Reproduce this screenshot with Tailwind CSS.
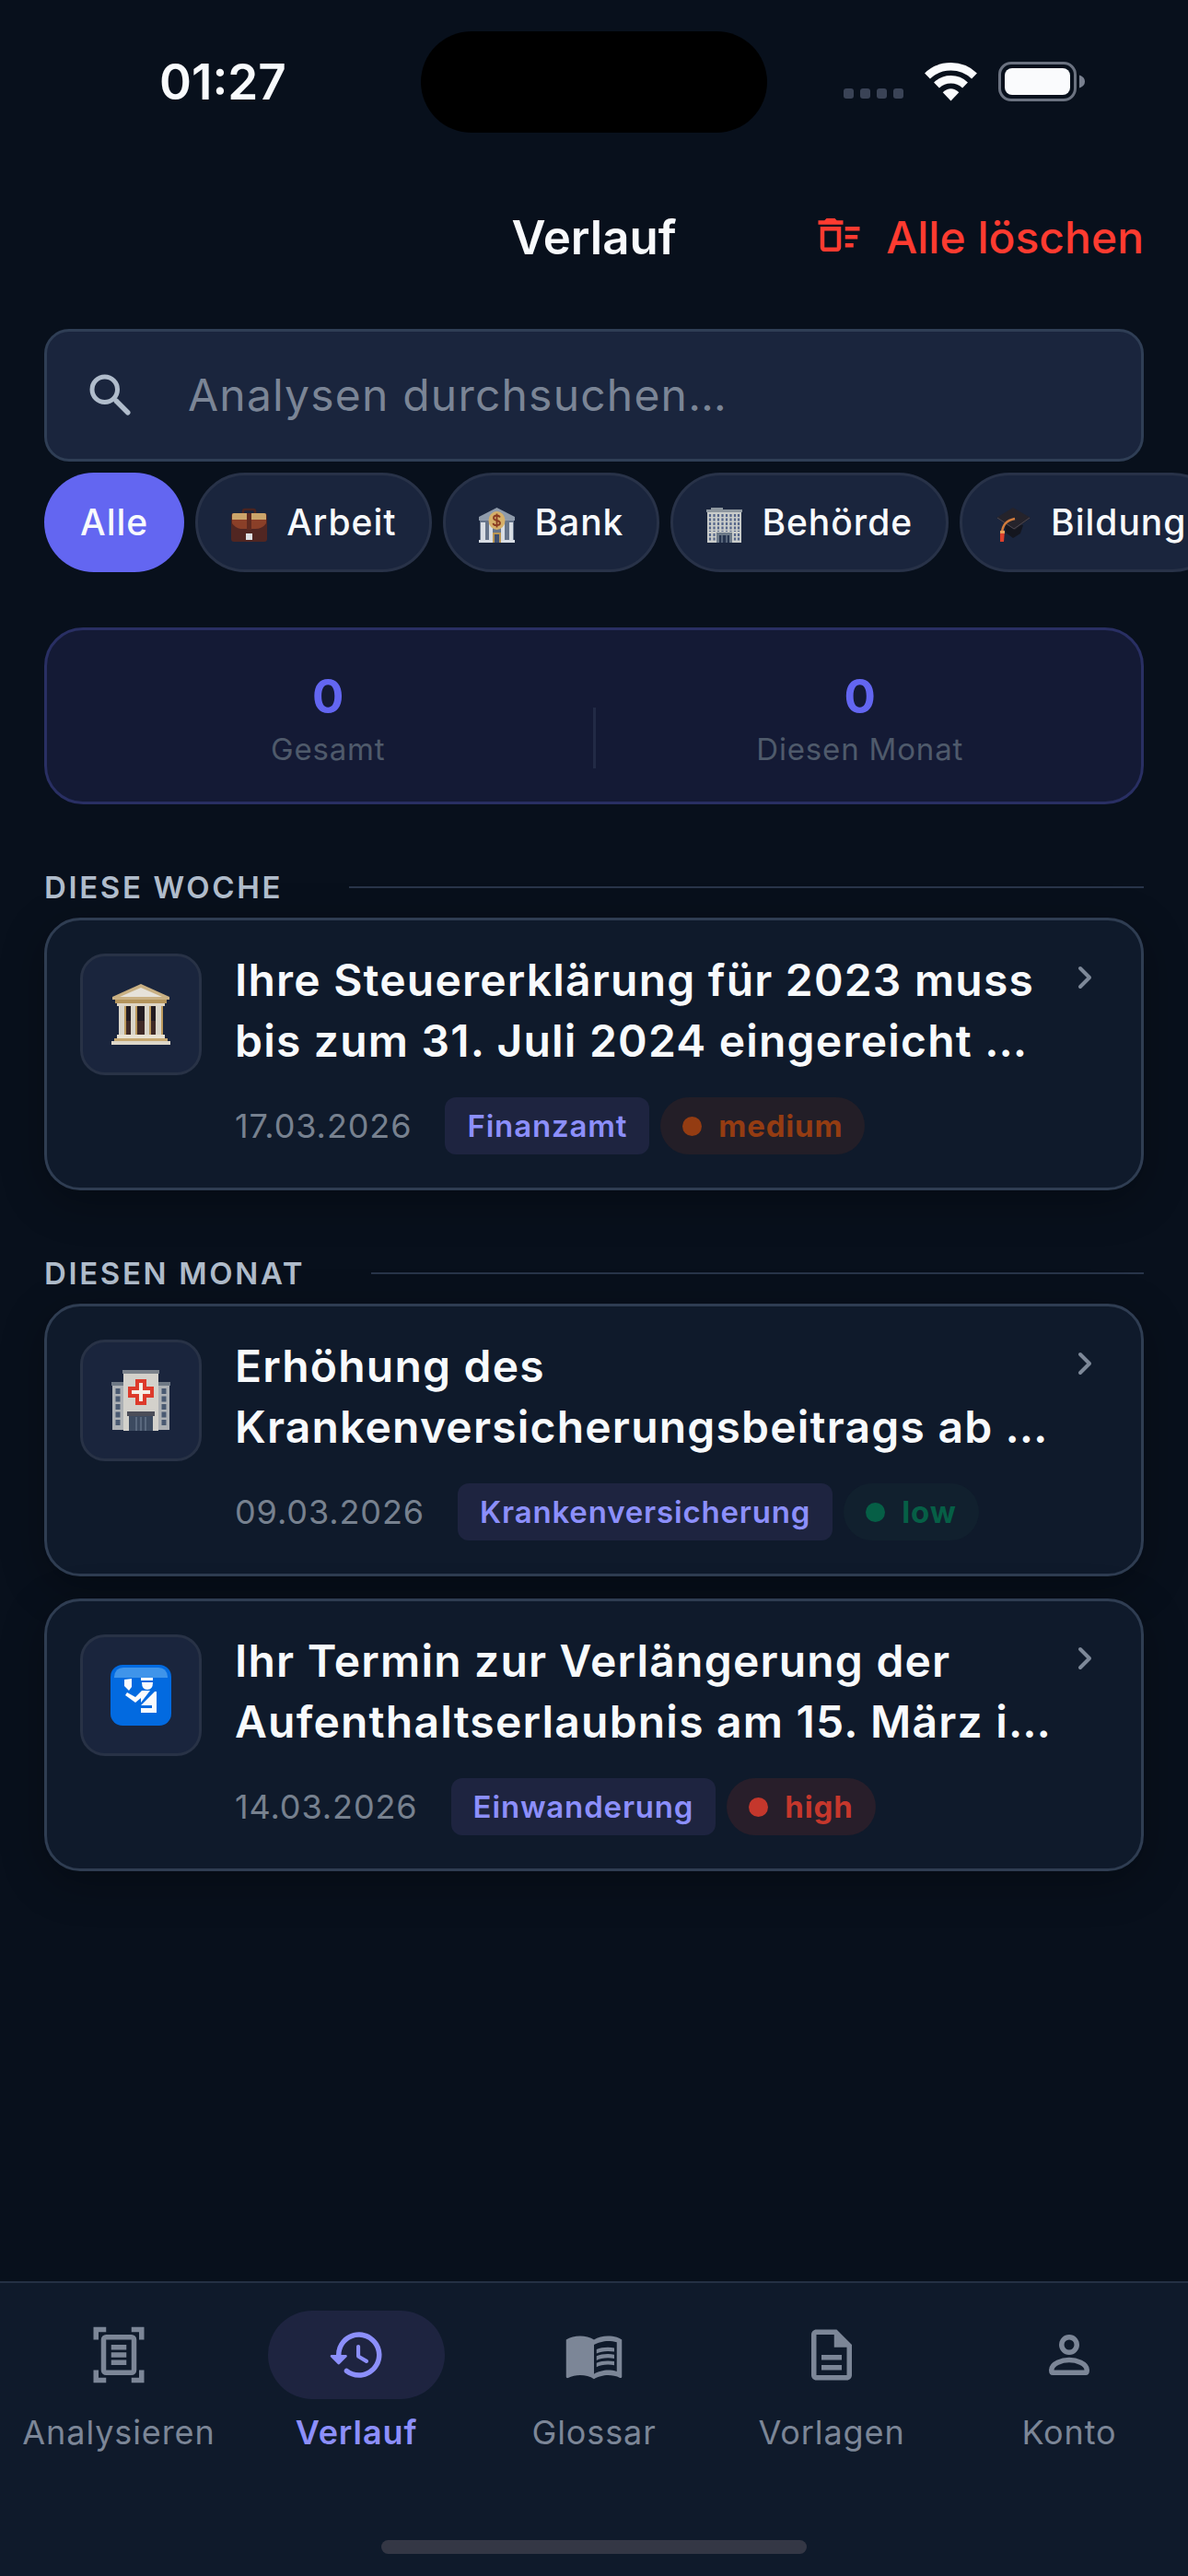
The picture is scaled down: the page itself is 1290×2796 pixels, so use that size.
<!DOCTYPE html>
<html lang="de">
<head>
<meta charset="utf-8">
<meta name="viewport" content="width=device-width, initial-scale=1">
<title>Verlauf</title>
<script src="https://cdn.jsdelivr.net/npm/@tailwindcss/browser@4"></script>
</head>
<body class="flex min-h-screen flex-col overflow-x-hidden bg-[#08101c] font-['Inter',sans-serif] text-[#f8fafc]">

<!-- Status bar -->
<div class="grid h-[177px] grid-cols-[1fr_376px_1fr] items-center">
  <div class="pl-[27px] text-center text-[53px] font-semibold leading-[60px]">01:27</div>
  <div class="h-[110px] rounded-full bg-black"></div>
  <div class="flex items-end justify-end gap-[23px] pr-[112px]">
    <svg class="h-[14px] w-[65px]" viewBox="0 0 65 14" fill="#3a4356"><rect width="11" height="11" rx="3"/><rect x="18" width="11" height="11" rx="3"/><rect x="36" width="11" height="11" rx="3"/><rect x="54" width="11" height="11" rx="3"/></svg>
    <svg class="h-[43px] w-[57px]" viewBox="0 0 57 43" fill="none" stroke="#fafbfd"><path d="M3 15.500A37 37 0 0 1 54 15.500" stroke-width="8.500"/><path d="M13 25.500A22.500 22.500 0 0 1 44 25.500" stroke-width="8.500"/><path d="M28.500 42.500 19.700 33.200Q28.500 25.500 37.300 33.200Z" fill="#fafbfd" stroke="none"/></svg>
    <svg class="h-[43px] w-[94px]" viewBox="0 0 94 43"><rect x="1.500" y="1.500" width="82" height="40" rx="12.500" fill="none" stroke="#6b7280" stroke-width="3"/><rect x="7" y="7" width="71" height="29" rx="8" fill="#fafbfd"/><path d="M88 14.500q6 2 6 7t-6 7z" fill="#7a8190"/></svg>
  </div>
</div>

<!-- Title bar -->
<header class="grid h-[161px] grid-cols-[1fr_auto_1fr] items-center">
  <h1 class="col-start-2 text-[51px] font-semibold leading-[60px]">Verlauf</h1>
  <button type="button" class="flex items-start gap-6 justify-self-end pr-[48px] text-[48px] font-medium leading-[60px] text-[#ff3b30]">
    <svg class="size-[54px]" viewBox="0 0 24 24" fill="currentColor"><path d="M15 16h4v2h-4zm0-8h7v2h-7zm0 4h6v2h-6zM3 18c0 1.100.9 2 2 2h6c1.100 0 2-.9 2-2V8H3v10zm2-8h6v8H5v-8zm5-6H6L5 5H2v2h12V5h-3z"/></svg>
    Alle löschen
  </button>
</header>

<main class="flex grow flex-col px-[48px] pt-[19px]">
  <!-- Search -->
  <label class="flex h-[144px] items-center rounded-[27px] border-3 border-[#2f3e55] bg-[#1a253d] pl-[39px]">
    <svg class="size-[60px] shrink-0 text-[#b0bccb]" viewBox="0 0 24 24" fill="none" stroke="currentColor" stroke-width="2" stroke-linecap="round"><circle cx="9.500" cy="9.500" r="5.500"/><path d="M14.500 14.500 19.500 19.500" stroke-width="2.200"/></svg>
    <input type="search" aria-label="Analysen durchsuchen" placeholder="Analysen durchsuchen…" class="ml-[54px] min-w-0 grow bg-transparent text-[48px] leading-[60px] tracking-wide outline-none placeholder:text-[#7b8596]">
  </label>

  <!-- Category filter -->
  <div class="-mr-[48px] mt-3 flex gap-3 overflow-hidden text-[39px] font-medium leading-[48px] tracking-wide">
    <button type="button" class="h-[108px] shrink-0 rounded-full bg-[#6366f1] px-[39px]">Alle</button>
    <button type="button" class="flex h-[108px] shrink-0 items-center gap-[21px] rounded-full border-3 border-[#283248] bg-[#1a253d] px-9">
      <svg class="size-[39px] translate-y-0.5" viewBox="0 0 39 39"><path d="M13 9V5q0-2 2-2h9q2 0 2 2v4" fill="none" stroke="#4a2420" stroke-width="2.500"/><rect y="7" width="39" height="31" rx="3" fill="#512622"/><path d="M1 9q0-2 2-2h33q2 0 2 2v9q-4 6-12 6H13Q5 24 1 18z" fill="#8a3f28"/><path d="M1 9q0-2 2-2h33q2 0 2 2v5H1z" fill="#cba56a"/><path d="M17 7h5v18h-5z" fill="#5f2a20"/><path d="M16 29h7v7h-7z" fill="#dde0e4"/></svg>
      Arbeit
    </button>
    <button type="button" class="flex h-[108px] shrink-0 items-center gap-[21px] rounded-full border-3 border-[#283248] bg-[#1a253d] px-9">
      <svg class="size-[39px] translate-y-0.5" viewBox="0 0 39 39"><path d="M0 11 19.500 1 39 11v4H0z" fill="#8f9bab"/><path d="M1 15h37v23H1z" fill="#66748a"/><path d="M2 17h5v19H2zm9 0h4v19h-4zm13 0h4v19h-4zm9 0h4v19h-4zM0 36h39v3H0z" fill="#d8dde4"/><path d="M15 28h9v11h-9z" fill="#b99553"/><path d="M17 30h5v9h-5z" fill="#3f5070"/><ellipse cx="19.500" cy="15" rx="9" ry="10" fill="#d6b069"/><path d="M23 11.500q-1-2-3.500-2-3.500 0-3.500 2.700c0 4 7 1.600 7 5.600 0 3-7 3.400-7.500 0M19.500 7.500v15" fill="none" stroke="#8a3c22" stroke-width="1.800"/></svg>
      Bank
    </button>
    <button type="button" class="flex h-[108px] shrink-0 items-center gap-[21px] rounded-full border-3 border-[#283248] bg-[#1a253d] px-9">
      <svg class="size-[39px] translate-y-0.5" viewBox="0 0 39 39"><path d="M5 1h13v3H5zM0 3h39v3H0z" fill="#8e979f"/><path d="M1 6h37v33H1z" fill="#c9ccca"/><path d="M4 8v19M8.500 8v19M13 8v19M17.500 8v19M22 8v19M26.500 8v19M31 8v19M35 8v19M4 29v8M8.500 29v8M31 29v8M35 29v8" stroke="#57678a" stroke-width="2.200" stroke-dasharray="3 1.500"/><path d="M11 28h17v11H11z" fill="#6d7a89"/><path d="M14 31h11v8H14z" fill="#26344e"/><path d="M17 31v8m5-8v8" stroke="#8794a2"/></svg>
      Behörde
    </button>
    <button type="button" class="flex h-[108px] shrink-0 items-center gap-[21px] rounded-full border-3 border-[#283248] bg-[#1a253d] px-9">
      <svg class="size-[39px] translate-y-0.5" viewBox="0 0 39 39"><path d="M10 18 30 20l-3 9-8 5-8-6z" fill="#14161f"/><path d="M1 12 19 1l19 11-17 13z" fill="#25232b"/><path d="M2 12 20 24l17-12" fill="none" stroke="#4c4750"/><path d="M21 13C12 15 8 19 7 28" fill="none" stroke="#d07b3c" stroke-width="2.500"/><path d="M5 26h5l-1 12H5z" fill="#dc3f2c"/><path d="M5 26h5v3H5z" fill="#e8a15a"/></svg>
      Bildung
    </button>
  </div>

  <!-- Totals -->
  <dl class="mt-[60px] flex h-[192px] rounded-[42px] border-3 border-[#292f63] bg-[#141a35] px-[18px] pt-[42px] text-center">
    <div class="flex flex-1 flex-col-reverse justify-end gap-1.5">
      <dt class="text-[33px] leading-[42px] tracking-wide text-[#4f5a6b]">Gesamt</dt>
      <dd class="text-[51px] font-bold leading-[60px] text-[#6366f1]">0</dd>
    </div>
    <div class="mt-[42px] h-[66px] w-[3px] bg-[#222a45]"></div>
    <div class="flex flex-1 flex-col-reverse justify-end gap-1.5">
      <dt class="text-[33px] leading-[42px] tracking-wide text-[#4f5a6b]">Diesen Monat</dt>
      <dd class="text-[51px] font-bold leading-[60px] text-[#6366f1]">0</dd>
    </div>
  </dl>

  <!-- This week -->
  <section class="mt-[69px]">
    <div class="mb-3 flex items-center gap-[72px]">
      <h2 class="text-[33px] font-semibold leading-[42px] tracking-[0.08em] text-[#b0bccb]">DIESE WOCHE</h2>
      <div class="h-[2px] grow bg-[#283449]"></div>
    </div>
    <a href="#steuer" class="flex gap-9 rounded-[39px] border-3 border-[#2f3d52] bg-[#0f1a2b] p-9 shadow-[0_12px_48px_rgba(0,0,0,0.3)]">
      <div class="flex size-[132px] shrink-0 items-center justify-center rounded-[27px] border-3 border-[#283246] bg-[#1a253d]">
        <svg class="size-[66px]" viewBox="0 0 66 66"><path d="M33 0 64 14v3H2v-3z" fill="#c9b083"/><path d="M33 4 56 14H10z" fill="#e6e2da"/><path d="M5 17h56v4H5z" fill="#b3945c"/><path d="M7 21h52v3H7z" fill="#ded6c6"/><path d="M12 24h42v31H12z" fill="#221c22"/><path d="M12 40h42v15H12z" fill="#4b3029" opacity=".7"/><path d="M9 24h8v31H9zm13 0h7v31h-7zm15 0h7v31h-7zm12 0h8v31h-8z" fill="#d9d5c9"/><path d="M15 24h2v31h-2zm12 0h2v31h-2zm15 0h2v31h-2zm13 0h2v31h-2z" fill="#bd9a5d"/><path d="M7 55h52v4H7z" fill="#e8e2d3"/><path d="M4 59h58v3H4z" fill="#c6a871"/><path d="M1 62h64v4H1z" fill="#ddd6c8"/></svg>
      </div>
      <div class="min-w-0 grow">
        <h3 class="-mt-1 text-[48px] font-semibold leading-[66px] tracking-wide">Ihre Steuererklärung für 2023 muss bis zum 31. Juli 2024 eingereicht …</h3>
        <div class="mt-7 flex items-center">
          <time datetime="2026-03-17" class="mr-9 text-[36px] leading-[48px] tracking-wide text-[#77818f]">17.03.2026</time>
          <span class="mr-3 rounded-[12px] bg-[#1e2440] px-6 text-[33px] font-semibold leading-[62px] tracking-wide text-[#8c8ffb]">Finanzamt</span>
          <span class="flex items-center gap-[18px] rounded-full bg-[#231e27] px-6 text-[33px] font-bold leading-[62px] tracking-wide text-[#943c12]"><i class="size-[21px] rounded-full bg-current"></i>medium</span>
        </div>
      </div>
      <svg class="-ml-6 size-[48px] shrink-0 text-[#7d8898]" viewBox="0 0 24 24" fill="none" stroke="currentColor" stroke-width="2" stroke-linecap="round" stroke-linejoin="round"><path d="m9 8 5 5-5 5"/></svg>
    </a>
  </section>

  <!-- This month -->
  <section class="mt-[69px]">
    <div class="mb-3 flex items-center gap-[72px]">
      <h2 class="text-[33px] font-semibold leading-[42px] tracking-[0.08em] text-[#b0bccb]">DIESEN MONAT</h2>
      <div class="h-[2px] grow bg-[#283449]"></div>
    </div>
    <div class="flex flex-col gap-6">
      <a href="#krankenkasse" class="flex gap-9 rounded-[39px] border-3 border-[#2f3d52] bg-[#0f1a2b] p-9 shadow-[0_12px_48px_rgba(0,0,0,0.3)]">
        <div class="flex size-[132px] shrink-0 items-center justify-center rounded-[27px] border-3 border-[#283246] bg-[#1a253d]">
          <svg class="size-[66px]" viewBox="0 0 66 66"><path d="M2 15h62v50H2z" fill="#adb1b5"/><path d="M1 13h64v4H1z" fill="#6e7885"/><path d="M8 20v40M58 20v40" stroke="#4a5a72" stroke-width="5" stroke-dasharray="6 2.500"/><path d="M14 2h38v64H14z" fill="#d3d1cb"/><path d="M13 0h40v4H13z" fill="#7c838c"/><path d="M29 12h8v8h8v8h-8v8h-8v-8h-8v-8h8z" fill="#f4eee6" stroke="#dd3a2b" stroke-width="4"/><path d="M18 45h30v5H18z" fill="#4b4d58"/><path d="M20 50h26v16H20z" fill="#3c4a60"/><path d="M28 51v15m10-15v15M33 51v15" stroke="#77859a"/></svg>
        </div>
        <div class="min-w-0 grow">
          <h3 class="-mt-1 text-[48px] font-semibold leading-[66px] tracking-wide">Erhöhung des Krankenversicherungsbeitrags ab …</h3>
          <div class="mt-7 flex items-center">
            <time datetime="2026-03-09" class="mr-9 text-[36px] leading-[48px] tracking-wide text-[#77818f]">09.03.2026</time>
            <span class="mr-3 rounded-[12px] bg-[#1e2440] px-6 text-[33px] font-semibold leading-[62px] tracking-wide text-[#8c8ffb]">Krankenversicherung</span>
            <span class="flex items-center gap-[18px] rounded-full bg-[#11202e] px-6 text-[33px] font-bold leading-[62px] tracking-wide text-[#065f46]"><i class="size-[21px] rounded-full bg-current"></i>low</span>
          </div>
        </div>
        <svg class="-ml-6 size-[48px] shrink-0 text-[#7d8898]" viewBox="0 0 24 24" fill="none" stroke="currentColor" stroke-width="2" stroke-linecap="round" stroke-linejoin="round"><path d="m9 8 5 5-5 5"/></svg>
      </a>
      <a href="#aufenthalt" class="flex gap-9 rounded-[39px] border-3 border-[#2f3d52] bg-[#0f1a2b] p-9 shadow-[0_12px_48px_rgba(0,0,0,0.3)]">
        <div class="flex size-[132px] shrink-0 items-center justify-center rounded-[27px] border-3 border-[#283246] bg-[#1a253d]">
          <svg class="size-[66px]" viewBox="0 0 66 66"><rect width="66" height="66" rx="13" fill="#026ae0"/><path d="M4 13Q5 3 14 3h38q9 0 10 10v1H4z" fill="#3f94ea"/><g fill="#fafbfd"><path d="M33 14h13v3H33zM34 19h12q0 8-6 8t-6-8z"/><path d="m15 16 8-1v9l-3 4-5-5z"/><path d="m18 30 9 5 7-7h9L33 41v-5l-6 5-11-8z"/><path d="M48 29h2v23H33v-5h12v-3H33z"/></g></svg>
        </div>
        <div class="min-w-0 grow">
          <h3 class="-mt-1 text-[48px] font-semibold leading-[66px] tracking-wide">Ihr Termin zur Verlängerung der Aufenthaltserlaubnis am 15. März i…</h3>
          <div class="mt-7 flex items-center">
            <time datetime="2026-03-14" class="mr-9 text-[36px] leading-[48px] tracking-wide text-[#77818f]">14.03.2026</time>
            <span class="mr-3 rounded-[12px] bg-[#1e2440] px-6 text-[33px] font-semibold leading-[62px] tracking-wide text-[#8c8ffb]">Einwanderung</span>
            <span class="flex items-center gap-[18px] rounded-full bg-[#281e2a] px-6 text-[33px] font-bold leading-[62px] tracking-wide text-[#c5372c]"><i class="size-[21px] rounded-full bg-current"></i>high</span>
          </div>
        </div>
        <svg class="-ml-6 size-[48px] shrink-0 text-[#7d8898]" viewBox="0 0 24 24" fill="none" stroke="currentColor" stroke-width="2" stroke-linecap="round" stroke-linejoin="round"><path d="m9 8 5 5-5 5"/></svg>
      </a>
    </div>
  </section>
</main>

<!-- Bottom navigation -->
<footer class="border-t-2 border-[#243044] bg-[#0f1a2b] pb-6 pt-[30px]">
  <nav class="grid grid-cols-5 text-[36px] leading-[48px] tracking-wide text-[#7c8697]">
    <a href="#analysieren" class="flex flex-col items-center gap-3">
      <span class="flex h-24 w-48 items-center justify-center"><svg class="size-[66px]" viewBox="0 0 24 24" fill="none" stroke="currentColor" stroke-width="2"><path d="M3 6V2h4M17 2h4v4M3 18v4h4M17 22h4v-4" stroke-width="2"/><rect x="6" y="5" width="12" height="14" rx="1"/><path d="M9 9h6M9 12h6M9 15h6"/></svg></span>
      Analysieren
    </a>
    <a href="#verlauf" aria-current="page" class="flex flex-col items-center gap-3 font-semibold text-[#8c8ffb]">
      <span class="flex h-24 w-48 items-center justify-center rounded-full bg-[#1e2440]"><svg class="size-[66px]" viewBox="0 0 24 24" fill="currentColor"><path d="M13.260 3C8.170 2.860 4 6.950 4 12H2.210c-.45 0-.67.54-.35.85l2.790 2.800c.2.200.51.200.71 0l2.790-2.800c.31-.31.09-.85-.36-.85H6c0-3.900 3.180-7.050 7.100-7 3.720.05 6.850 3.180 6.900 6.900.05 3.910-3.100 7.100-7 7.100-1.610 0-3.100-.55-4.280-1.480-.4-.31-.96-.28-1.320.08-.42.42-.39 1.130.08 1.490C9 20.290 10.910 21 13 21c5.050 0 9.140-4.170 9-9.260-.13-4.690-4.050-8.610-8.740-8.740zm-.51 5c-.41 0-.75.34-.75.75v3.680c0 .35.190.68.490.86l3.120 1.850c.36.210.82.090 1.030-.26.210-.36.090-.82-.26-1.030l-2.880-1.710v-3.400c0-.4-.34-.74-.75-.74z"/></svg></span>
      Verlauf
    </a>
    <a href="#glossar" class="flex flex-col items-center gap-3">
      <span class="flex h-24 w-48 items-center justify-center"><svg class="size-[66px]" viewBox="0 0 24 24" fill="currentColor"><path d="M21 5c-1.110-.35-2.330-.5-3.500-.5-1.950 0-4.050.4-5.500 1.500-1.450-1.100-3.550-1.500-5.500-1.500S2.450 4.900 1 6v14.650c0 .25.250.5.500.5.100 0 .150-.05.250-.05C3.100 20.450 5.050 20 6.500 20c1.950 0 4.050.4 5.500 1.500 1.350-.85 3.800-1.500 5.500-1.500 1.650 0 3.350.3 4.750 1.050.100.050.150.050.250.050.250 0 .500-.25.500-.5V6c-.6-.45-1.250-.75-2-1zm0 13.500c-1.100-.35-2.300-.5-3.500-.5-1.700 0-4.150.65-5.500 1.500V8c1.350-.85 3.800-1.500 5.500-1.500 1.200 0 2.400.15 3.500.5v11.500z"/><path d="M17.500 10.500c.88 0 1.730.09 2.500.26V9.240c-.79-.15-1.640-.24-2.500-.24-1.700 0-3.240.29-4.500.83v1.660c1.130-.64 2.700-.99 4.500-.99zM13 12.490v1.660c1.130-.64 2.700-.99 4.500-.99.88 0 1.730.09 2.500.26V11.900c-.79-.15-1.640-.24-2.500-.24-1.700 0-3.240.3-4.500.83zm4.500 1.840c-1.700 0-3.240.29-4.500.83v1.660c1.130-.64 2.700-.99 4.500-.99.88 0 1.730.09 2.500.26v-1.520c-.79-.16-1.640-.24-2.500-.24z"/></svg></span>
      Glossar
    </a>
    <a href="#vorlagen" class="flex flex-col items-center gap-3">
      <span class="flex h-24 w-48 items-center justify-center"><svg class="size-[66px]" viewBox="0 0 24 24" fill="currentColor"><path d="M8 16h8v2H8zm0-4h8v2H8zm6-10H6c-1.100 0-2 .9-2 2v16c0 1.100.89 2 1.990 2H18c1.100 0 2-.9 2-2V8l-6-6zm4 18H6V4h7v5h5v11z"/></svg></span>
      Vorlagen
    </a>
    <a href="#konto" class="flex flex-col items-center gap-3">
      <span class="flex h-24 w-48 items-center justify-center"><svg class="size-[66px]" viewBox="0 0 24 24" fill="none" stroke="currentColor" stroke-width="2"><circle cx="12" cy="8" r="3"/><path d="M5 18q0 1 .5 1h13q.5 0 .5-1c0-2.700-4.300-4-7-4s-7 1.300-7 4z"/></svg></span>
      Konto
    </a>
  </nav>
  <div class="mx-auto mt-[93px] h-[15px] w-[462px] rounded-full bg-[#343745]"></div>
</footer>
</body>
</html>
